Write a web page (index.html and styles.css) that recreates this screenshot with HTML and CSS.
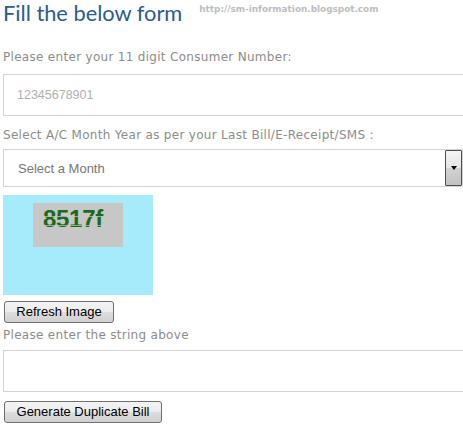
FILE: index.html
```html
<!DOCTYPE html>
<html>
<head>
<meta charset="utf-8">
<link rel="stylesheet" href="styles.css">
</head>
<body>
<div class="page">
  <div class="header">
    <h1 class="title">Fill the below form</h1>
    <span class="url">http://sm-information.blogspot.com</span>
  </div>

  <label class="label label-first">Please enter your 11 digit Consumer Number:</label>
  <input class="field" type="text" placeholder="12345678901">

  <label class="label label-second">Select A/C Month Year as per your Last Bill/E-Receipt/SMS :</label>
  <div class="select-wrap">
    <select class="select">
      <option>Select a Month</option>
    </select>
    <span class="select-btn"><span class="arrow"></span></span>
  </div>

  <div class="captcha">
    <div class="captcha-box"><span class="captcha-text">8517f</span></div>
  </div>

  <button class="btn btn-refresh" type="button">Refresh Image</button>
  <label class="label label-third">Please enter the string above</label>
  <input class="field field-captcha" type="text">

  <button class="btn btn-generate" type="button">Generate Duplicate Bill</button>
</div>
</body>
</html>
```

FILE: styles.css
```css
html, body {
  margin: 0;
  padding: 0;
  background: #ffffff;
  overflow: hidden;
}

.page {
  padding-left: 3px;
  display: flex;
  flex-direction: column;
  align-items: flex-start;
}

.header {
  display: flex;
  align-items: flex-start;
  height: 28px;
}

.title {
  margin: 0;
  font-family: Lato, "Open Sans", sans-serif;
  font-weight: normal;
  font-size: 21.8px;
  line-height: 26px;
  color: #2b5c92;
}

.url {
  margin-left: 17px;
  margin-top: 4px;
  font-family: "DejaVu Sans", Verdana, sans-serif;
  font-weight: bold;
  font-size: 8.9px;
  line-height: 11px;
  color: #bdbdbd;
}

.label {
  display: block;
  font-family: "DejaVu Sans", sans-serif;
  font-size: 12px;
  line-height: 16px;
  color: #8c8c8c;
  letter-spacing: 0.3px;
}

.label-first {
  margin-top: 21px;
}

.label-second {
  margin-top: 11px;
}

.label-third {
  margin-top: 4px;
}

.field {
  box-sizing: border-box;
  width: 480px;
  height: 42px;
  margin: 9px 0 0 0;
  padding: 0 13px;
  border: 1px solid #d4d4d4;
  border-radius: 0;
  font-family: "Liberation Sans", Arial, sans-serif;
  font-size: 12.5px;
  color: #555;
  background: #fff;
  outline: none;
}

.field::placeholder {
  color: #b0b0b0;
}

.field-captcha {
  margin-top: 7px;
}

.select-wrap {
  position: relative;
  margin-top: 6px;
  width: 460px;
  height: 38px;
}

.select {
  -webkit-appearance: none;
  appearance: none;
  box-sizing: border-box;
  width: 460px;
  height: 38px;
  margin: 0;
  padding: 0 0 0 14px;
  border: 1px solid #d4d4d4;
  border-radius: 0;
  background: #fff;
  font-family: "Liberation Sans", Arial, sans-serif;
  font-size: 13px;
  color: #777;
  outline: none;
}

.select-btn {
  position: absolute;
  right: 1px;
  top: 1px;
  box-sizing: border-box;
  width: 17px;
  height: 36px;
  border: 1px solid #4d4d4d;
  border-radius: 1px;
  background: linear-gradient(#f4f4f4, #e6e6e6 50%, #d2d2d2 51%, #c2c2c2);
  display: flex;
  align-items: center;
  justify-content: center;
}

.arrow {
  width: 0;
  height: 0;
  border-left: 3.5px solid transparent;
  border-right: 3.5px solid transparent;
  border-top: 4px solid #000;
}

.captcha {
  margin-top: 8px;
  width: 150px;
  height: 100px;
  background: #a6ebfb;
  box-sizing: border-box;
  padding: 8px 0 0 30px;
}

.captcha-box {
  width: 90px;
  height: 44px;
  background: #c7c7c7;
  box-sizing: border-box;
  padding: 3px 0 0 10px;
  position: relative;
}

.captcha-text {
  font-family: "Liberation Sans", Arial, sans-serif;
  font-weight: bold;
  font-size: 24px;
  line-height: 26px;
  letter-spacing: -0.3px;
  color: #1b6a1b;
}

.captcha-box::after {
  content: "";
  position: absolute;
  left: 9px;
  top: 13px;
  width: 62px;
  height: 8px;
  border-top: 1px solid rgba(199, 199, 199, 0.7);
  border-bottom: 1px solid rgba(199, 199, 199, 0.7);
}

.btn {
  box-sizing: border-box;
  margin: 6px 0 0 1px;
  padding: 0 10px;
  height: 22px;
  border: 1px solid #707070;
  border-radius: 3px;
  background: linear-gradient(#f3f3f3, #ececec 50%, #dedede 51%, #d0d0d0);
  font-family: "Liberation Sans", Arial, sans-serif;
  font-size: 13px;
  line-height: 20px;
  color: #000;
}

.btn-refresh {
  width: 110px;
}

.btn-generate {
  margin-top: 9px;
  width: 158px;
}
```
